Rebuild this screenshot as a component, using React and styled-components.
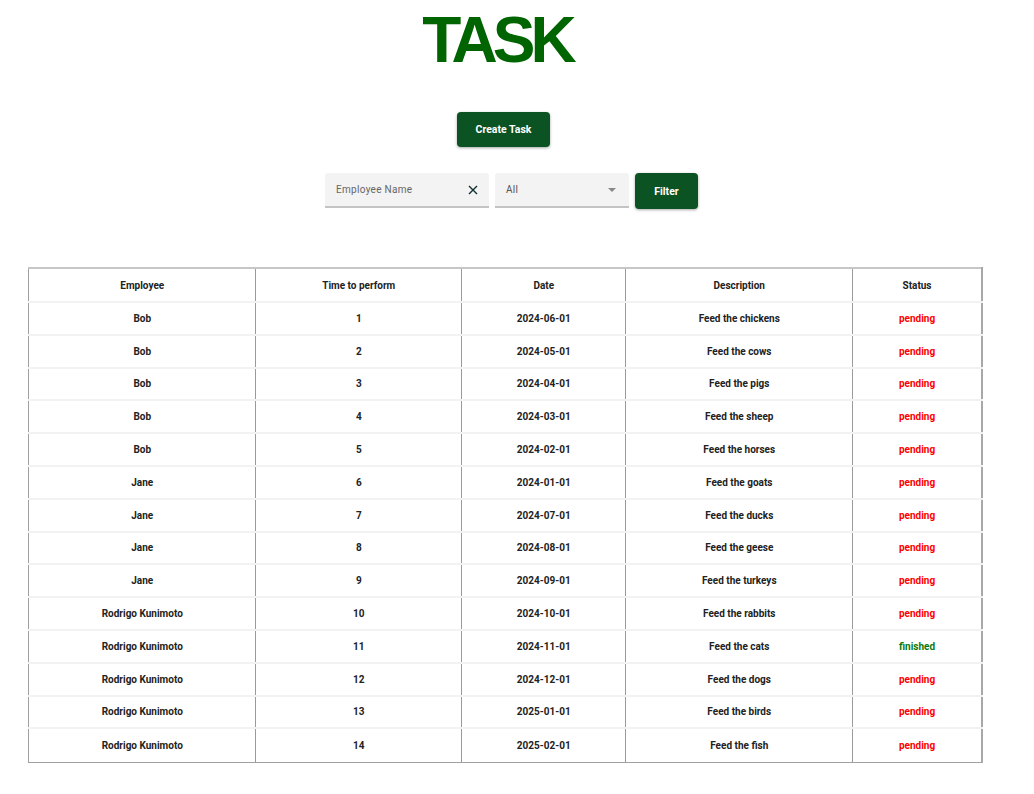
import React from "react";
import styled, { createGlobalStyle } from "styled-components";

const Global = createGlobalStyle`
  html, body { margin: 0; padding: 0; background: #fff; }
  body { font-family: Roboto, "Liberation Sans", sans-serif; }
`;

const Page = styled.div`
  width: 1034px;
  display: flex;
  flex-direction: column;
  align-items: center;
  padding-top: 8px;
`;

const Title = styled.h1`
  margin: 0 45px 0 0;
  font-family: "Liberation Sans", Arial, sans-serif;
  font-weight: 700;
  font-size: 64px;
  line-height: 64px;
  letter-spacing: -5px;
  color: #006400;
  padding-left: 5px;
`;

const PrimaryButton = styled.button`
  border: none;
  border-radius: 4px;
  background: #0b5323;
  color: #fff;
  font-family: Roboto, sans-serif;
  font-weight: 700;
  font-size: 10.5px;
  height: ${(p) => p.$h || 35}px;
  width: ${(p) => p.$w}px;
  box-shadow: 0 1px 3px rgba(0, 0, 0, 0.35);
  cursor: pointer;
  padding: 0;
`;

const CreateWrap = styled.div`
  margin-top: 40px;
  margin-right: 27px;
`;

const FilterRow = styled.div`
  margin-top: 26px;
  margin-left: -11px;
  display: flex;
  gap: 6px;
  align-items: flex-start;
`;

const Field = styled.div`
  width: ${(p) => p.$w}px;
  background: #f3f3f3;
  border-bottom: 2px solid #c4c4c4;
  border-radius: 3px 3px 0 0;
  display: flex;
  align-items: center;
  justify-content: space-between;
  padding: 0 11px;
  box-sizing: border-box;
  height: 35px;
  font-size: 10px;
  letter-spacing: 0.3px;
  color: ${(p) => p.$color || "#666"};
`;

const Table = styled.table`
  margin-top: 58px;
  margin-left: -23px;
  width: 954px;
  table-layout: fixed;
  border-collapse: collapse;
  border-top: 2px solid #c6c6c6;
  border-left: 1px solid #a0a0a0;
  border-right: 2px solid #a8a8a8;
  border-bottom: 1px solid #a0a0a0;
  font-size: 10px;
  font-weight: 700;
  color: #222;
`;

const Col = styled.col`
  width: ${(p) => p.$w}px;
`;

const Cell = styled.td`
  height: 30.8px;
  padding: 0;
  text-align: center;
  border-right: 1px solid #9a9a9a;
  border-bottom: 2px solid #f2f2f2;
  color: ${(p) =>
    p.$status === "pending" ? "#ff0000" : p.$status === "finished" ? "#0a7a0a" : "#222"};
  &:last-child { border-right: none; }
`;

const HeadCell = styled(Cell).attrs({ as: "th" })`
  height: 32px;
`;

const Row = styled.tr`
  &:last-child td { border-bottom: none; height: 32.5px; }
`;

const widths = [227, 206, 164, 227, 129];

const data = [
  ["Bob", 1, "2024-06-01", "Feed the chickens", "pending"],
  ["Bob", 2, "2024-05-01", "Feed the cows", "pending"],
  ["Bob", 3, "2024-04-01", "Feed the pigs", "pending"],
  ["Bob", 4, "2024-03-01", "Feed the sheep", "pending"],
  ["Bob", 5, "2024-02-01", "Feed the horses", "pending"],
  ["Jane", 6, "2024-01-01", "Feed the goats", "pending"],
  ["Jane", 7, "2024-07-01", "Feed the ducks", "pending"],
  ["Jane", 8, "2024-08-01", "Feed the geese", "pending"],
  ["Jane", 9, "2024-09-01", "Feed the turkeys", "pending"],
  ["Rodrigo Kunimoto", 10, "2024-10-01", "Feed the rabbits", "pending"],
  ["Rodrigo Kunimoto", 11, "2024-11-01", "Feed the cats", "finished"],
  ["Rodrigo Kunimoto", 12, "2024-12-01", "Feed the dogs", "pending"],
  ["Rodrigo Kunimoto", 13, "2025-01-01", "Feed the birds", "pending"],
  ["Rodrigo Kunimoto", 14, "2025-02-01", "Feed the fish", "pending"],
];

const headers = ["Employee", "Time to perform", "Date", "Description", "Status"];

export default function App() {
  return (
    <Page>
      <Global />
      <Title>TASK</Title>
      <CreateWrap>
        <PrimaryButton $w={93}>Create Task</PrimaryButton>
      </CreateWrap>
      <FilterRow>
        <Field $w={164}>
          <span>Employee Name</span>
          <svg width="10" height="10" viewBox="0 0 10 10">
            <path d="M1 1 L9 9 M9 1 L1 9" stroke="#0f2f2f" strokeWidth="1.4" />
          </svg>
        </Field>
        <Field $w={134} $color="#555">
          <span>All</span>
          <svg width="8" height="4" viewBox="0 0 8 4" style={{ marginRight: 2 }}>
            <path d="M0 0 L8 0 L4 4 Z" fill="#888" />
          </svg>
        </Field>
        <PrimaryButton $w={63} $h={36}>Filter</PrimaryButton>
      </FilterRow>
      <Table>
        <colgroup>
          {widths.map((w, i) => (
            <Col key={i} $w={w} />
          ))}
        </colgroup>
        <thead>
          <Row>
            {headers.map((h) => (
              <HeadCell key={h}>{h}</HeadCell>
            ))}
          </Row>
        </thead>
        <tbody>
          {data.map((r, i) => (
            <Row key={i}>
              {r.map((v, j) => (
                <Cell key={j} $status={j === 4 ? v : undefined}>{v}</Cell>
              ))}
            </Row>
          ))}
        </tbody>
      </Table>
    </Page>
  );
}
